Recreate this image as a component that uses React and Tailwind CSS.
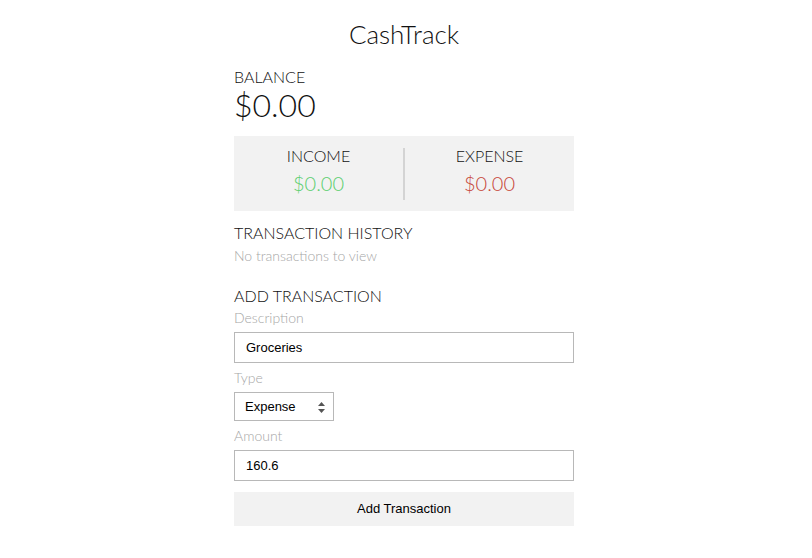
export default function App() {
  return (
    <div className="min-h-[558px] bg-white pr-[4px] font-['Lato','Open_Sans',sans-serif] font-light text-[#111]">
      <div className="mx-auto w-[340px] pt-[18px]">
        <h1 className="text-center text-[26px] leading-[32px] font-light">CashTrack</h1>

        <div className="mt-[17px] text-[16px] leading-[20px] uppercase">Balance</div>
        <div className="text-[32px] leading-[36px] font-light">$0.00</div>

        <div className="mt-[13px] flex h-[75px] items-start bg-[#f2f2f2] pt-[10px]">
          <div className="flex-1 text-center">
            <div className="text-[16px] leading-[20px] uppercase">Income</div>
            <div className="mt-[5px] text-[20px] leading-[24px] text-[#5ccf70]">$0.00</div>
          </div>
          <div className="mt-[2px] h-[52px] w-[2px] bg-[#d4d4d4]" />
          <div className="flex-1 text-center">
            <div className="text-[16px] leading-[20px] uppercase">Expense</div>
            <div className="mt-[5px] text-[20px] leading-[24px] text-[#c7473a]">$0.00</div>
          </div>
        </div>

        <div className="mt-[12px] text-[16px] leading-[20px] uppercase">Transaction History</div>
        <div className="mt-[4px] text-[14px] leading-[18px] text-[#a6a6a6]">No transactions to view</div>

        <div className="mt-[21px] text-[16px] leading-[20px] uppercase">Add Transaction</div>
        <label className="mt-[3px] block text-[14px] leading-[18px] text-[#a6a6a6]">Description</label>
        <input
          className="mt-[5px] block h-[31px] w-full border border-[#b8b8b8] px-[11px] font-['Liberation_Sans',Arial,sans-serif] text-[13px] font-normal text-black outline-none"
          defaultValue="Groceries"
        />
        <label className="mt-[6px] block text-[14px] leading-[18px] text-[#a6a6a6]">Type</label>
        <div className="relative mt-[5px] flex h-[29px] w-[100px] items-center border border-[#b8b8b8] px-[10px] font-['Liberation_Sans',Arial,sans-serif] text-[13px] font-normal text-black">
          <span>Expense</span>
          <svg className="absolute right-[8px] top-[9px]" width="7" height="11" viewBox="0 0 7 11">
            <path d="M3.5 0 L7 4 H0 Z" fill="#555" />
            <path d="M3.5 11 L7 7 H0 Z" fill="#555" />
          </svg>
        </div>
        <label className="mt-[6px] block text-[14px] leading-[18px] text-[#a6a6a6]">Amount</label>
        <input
          className="mt-[5px] block h-[31px] w-full border border-[#b8b8b8] px-[11px] font-['Liberation_Sans',Arial,sans-serif] text-[13px] font-normal text-black outline-none"
          defaultValue="160.6"
        />
        <button className="mt-[11px] block h-[34px] w-full bg-[#f2f2f2] font-['Liberation_Sans',Arial,sans-serif] text-[13px] font-normal text-black">
          Add Transaction
        </button>
      </div>
    </div>
  )
}
